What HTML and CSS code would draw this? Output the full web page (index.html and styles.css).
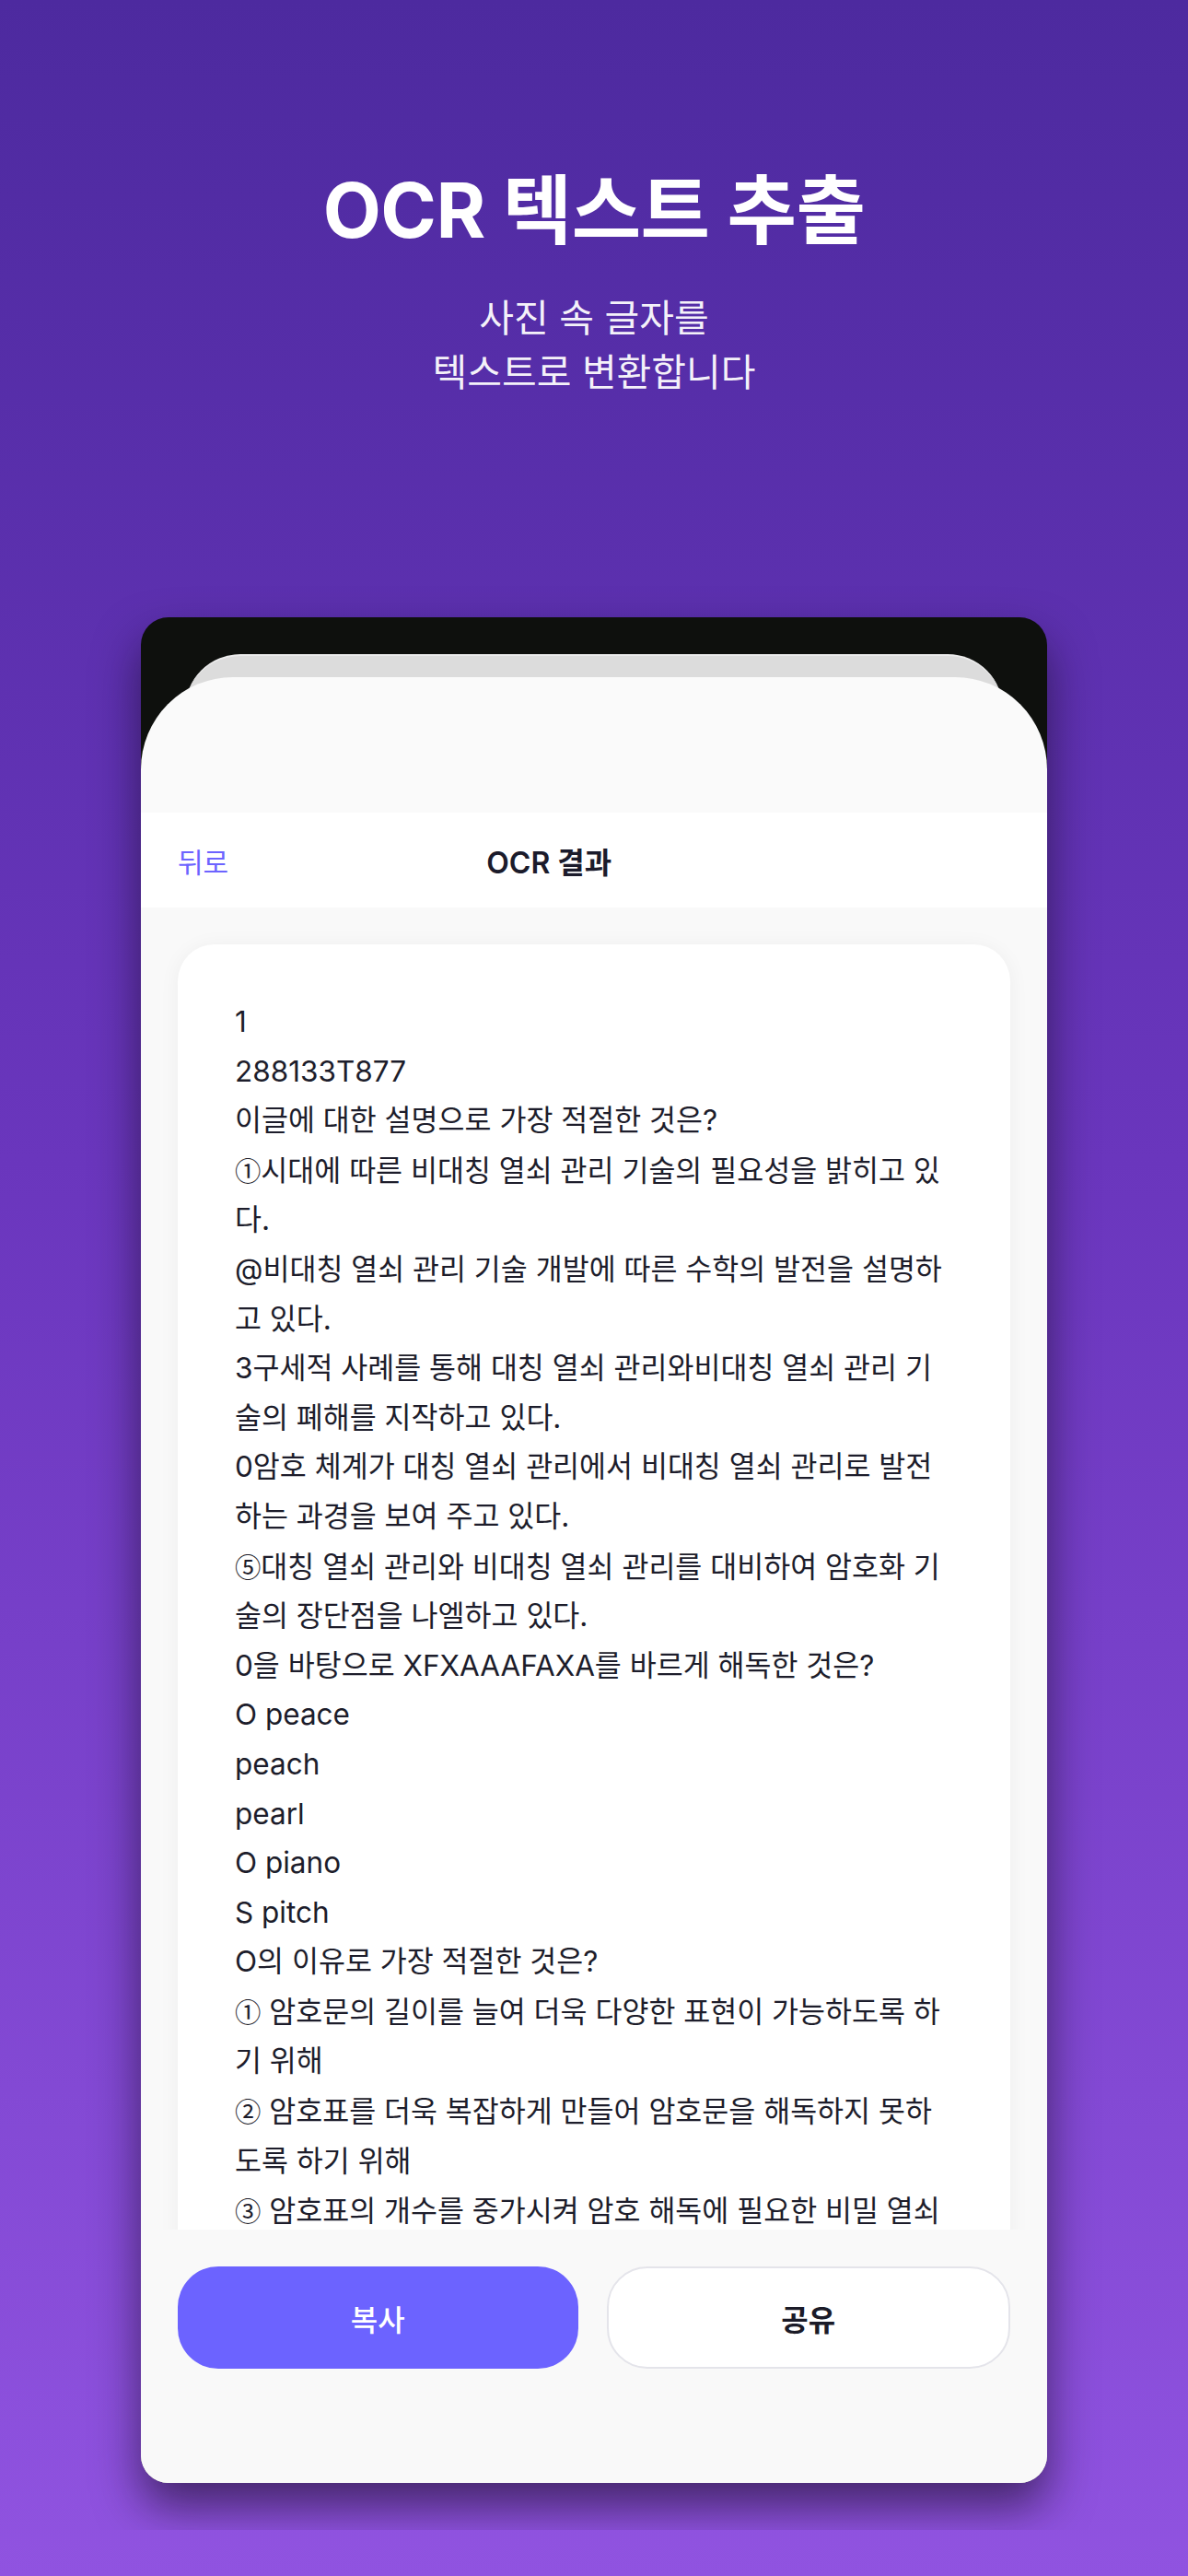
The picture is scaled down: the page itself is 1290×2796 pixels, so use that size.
FILE: index.html
```html
<!DOCTYPE html>
<html lang="ko">
<head>
<meta charset="utf-8">
<title>OCR 텍스트 추출</title>
<link rel="stylesheet" href="styles.css">
</head>
<body>
<div class="page">
  <header class="hero">
    <h1 class="hero-title">OCR 텍스트 추출</h1>
    <p class="hero-sub">사진 속 글자를<br>텍스트로 변환합니다</p>
  </header>

  <section class="stage">
    <div class="frame">
      <div class="back-card"></div>
      <div class="sheet">
        <div class="sheet-top"></div>
        <nav class="nav">
          <span class="nav-back">뒤로</span>
          <span class="nav-title">OCR 결과</span>
        </nav>
        <div class="content">
          <div class="scroll">
            <div class="text-card">
              <div class="line">1</div>
              <div class="line">288133T877</div>
              <div class="line">이글에 대한 설명으로 가장 적절한 것은?</div>
              <div class="line"><span class="circ">①</span>시대에 따른 비대칭 열쇠 관리 기술의 필요성을 밝히고 있</div>
              <div class="line">다.</div>
              <div class="line">@비대칭 열쇠 관리 기술 개발에 따른 수학의 발전을 설명하</div>
              <div class="line">고 있다.</div>
              <div class="line">3구세적 사례를 통해 대칭 열쇠 관리와비대칭 열쇠 관리 기</div>
              <div class="line">술의 폐해를 지작하고 있다.</div>
              <div class="line">0암호 체계가 대칭 열쇠 관리에서 비대칭 열쇠 관리로 발전</div>
              <div class="line">하는 과경을 보여 주고 있다.</div>
              <div class="line"><span class="circ">⑤</span>대칭 열쇠 관리와 비대칭 열쇠 관리를 대비하여 암호화 기</div>
              <div class="line">술의 장단점을 나엘하고 있다.</div>
              <div class="line">0을 바탕으로 XFXAAAFAXA를 바르게 해독한 것은?</div>
              <div class="line">O peace</div>
              <div class="line">peach</div>
              <div class="line">pearl</div>
              <div class="line">O piano</div>
              <div class="line">S pitch</div>
              <div class="line">O의 이유로 가장 적절한 것은?</div>
              <div class="line"><span class="circ">①</span> 암호문의 길이를 늘여 더욱 다양한 표현이 가능하도록 하</div>
              <div class="line">기 위해</div>
              <div class="line"><span class="circ">②</span> 암호표를 더욱 복잡하게 만들어 암호문을 해독하지 못하</div>
              <div class="line">도록 하기 위해</div>
              <div class="line"><span class="circ">③</span> 암호표의 개수를 중가시켜 암호 해독에 필요한 비밀 열쇠</div>
            </div>
          </div>
          <div class="actions">
            <button class="btn btn-primary">복사</button>
            <button class="btn btn-outline">공유</button>
          </div>
        </div>
      </div>
    </div>
  </section>
</div>
</body>
</html>
```

FILE: styles.css
```css
html, body {
  margin: 0;
  padding: 0;
}

body {
  font-family: "Inter", "Noto Sans CJK KR", sans-serif;
}

.page {
  min-height: 2796px;
  background: linear-gradient(180deg, #4d2a9f 0%, #6a36bd 45%, #9053e0 100%);
  display: flex;
  flex-direction: column;
}

.hero {
  padding-top: 182px;
  text-align: center;
  color: #ffffff;
}

.hero-title {
  margin: 0;
  font-size: 82px;
  line-height: 94px;
  font-weight: 700;
  letter-spacing: -0.5px;
}

.hero-sub {
  margin: 40px 0 0;
  font-size: 41px;
  line-height: 59px;
  font-weight: 400;
  color: rgba(255, 255, 255, 0.96);
}

.stage {
  padding: 236px 0 51px;
  overflow: hidden;
}

.frame {
  width: 984px;
  height: 2025px;
  margin: 0 auto;
  box-sizing: border-box;
  padding-top: 40px;
  background: #0e100d;
  border-radius: 30px;
  overflow: hidden;
  display: flex;
  flex-direction: column;
  box-shadow: 0 26px 50px rgba(20, 10, 30, 0.6);
}

.back-card {
  flex-shrink: 0;
  height: 60px;
  margin: 0 48px;
  background: #dcdcdc;
  border-top: 2px solid #ececec;
  box-sizing: border-box;
  border-radius: 60px 60px 0 0;
}

.sheet {
  flex: 1;
  min-height: 0;
  margin-top: -35px;
  background: #fafafa;
  border-radius: 100px 100px 0 0;
  display: flex;
  flex-direction: column;
}

.sheet-top {
  flex-shrink: 0;
  height: 147px;
}

.nav {
  flex-shrink: 0;
  height: 103px;
  box-sizing: border-box;
  padding: 0 40px;
  background: #ffffff;
  display: flex;
  align-items: center;
}

.nav-back {
  font-size: 30px;
  color: #6c63ff;
}

.nav-title {
  margin-left: 280px;
  font-size: 32px;
  font-weight: 600;
  color: #1b1b2b;
}

.content {
  flex: 1;
  min-height: 0;
  display: flex;
  flex-direction: column;
  padding-bottom: 124px;
  background: #f9f9f9;
}

.scroll {
  flex: 1;
  min-height: 0;
  overflow: hidden;
  padding: 40px 40px 0;
}

.text-card {
  background: #ffffff;
  border-radius: 40px 40px 0 0;
  padding: 64px 62px 40px;
  box-shadow: 0 2px 22px rgba(0, 0, 0, 0.05);
  color: #1d1d2b;
  font-size: 31.5px;
  line-height: 40px;
  display: flex;
  flex-direction: column;
  gap: 13.6px;
}

.line {
  white-space: nowrap;
}

.circ {
  font-family: "Noto Sans CJK KR", sans-serif;
  font-size: 0.9em;
}

.actions {
  flex-shrink: 0;
  display: flex;
  gap: 31px;
  margin-top: 40px;
  padding: 0 40px;
}

.btn {
  flex: 1;
  height: 111px;
  border-radius: 44px;
  font-family: "Inter", "Noto Sans CJK KR", sans-serif;
  font-size: 32px;
  cursor: pointer;
}

.btn-primary {
  background: #6c63ff;
  border: none;
  color: #ffffff;
  font-weight: 500;
}

.btn-outline {
  background: #ffffff;
  border: 2px solid #e4e4ea;
  color: #1b1b28;
  font-weight: 700;
}
```
